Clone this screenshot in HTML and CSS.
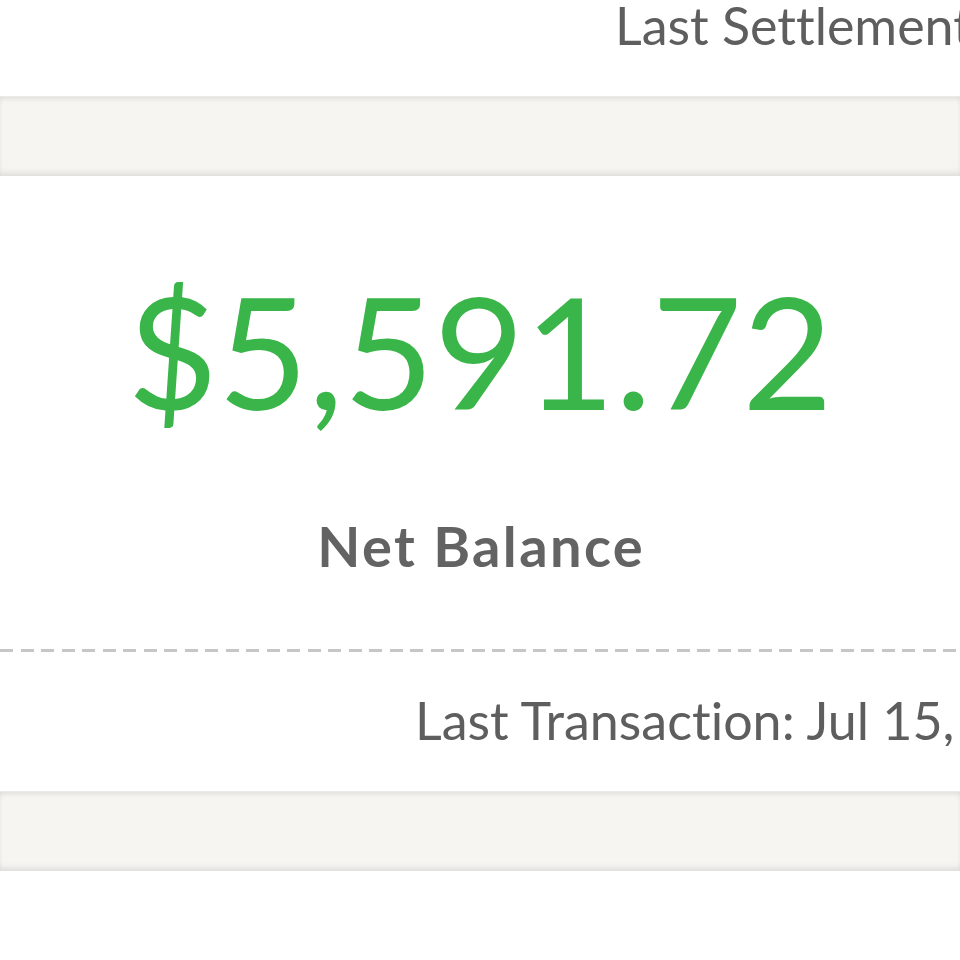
FILE: index.html
```html
<!DOCTYPE html>
<html lang="en">
<head>
<meta charset="utf-8">
<title>Net Balance</title>
<link rel="stylesheet" href="styles.css">
</head>
<body>
<div class="page">
  <div class="header">
    <span class="meta meta-settlement">Last Settlement: Jul 15, 2024</span>
  </div>
  <div class="band"></div>
  <section class="card">
    <div class="amount">$5,591.72</div>
    <div class="label">Net Balance</div>
    <div class="divider"></div>
    <div class="footer">
      <span class="meta meta-transaction">Last Transaction: Jul 15, 2024</span>
    </div>
  </section>
  <div class="band"></div>
</div>
</body>
</html>
```
FILE: styles.css
```css
html, body {
  margin: 0;
  padding: 0;
  background: #ffffff;
}
body {
  width: 960px;
  height: 960px;
  overflow: hidden;
  font-family: Lato, "Open Sans", sans-serif;
  font-variant-ligatures: none;
  font-feature-settings: "liga" 0, "clig" 0;
}
.page {
  display: flex;
  flex-direction: column;
  width: 960px;
}
.header {
  height: 96px;
  display: flex;
  white-space: nowrap;
  overflow: hidden;
}
.meta {
  font-size: 52px;
  line-height: 50px;
  color: #5e5e5e;
  font-weight: 400;
  white-space: nowrap;
}
.meta-settlement {
  padding-left: 615px;
}
.band {
  height: 80px;
  background: #f6f5f2;
  box-shadow: inset 0 4px 5px -2px rgba(0,0,0,0.09), inset 0 -4px 6px -2px rgba(0,0,0,0.10);
  border-top: 1px solid #ebeae7;
  border-bottom: 1px solid #e2e1de;
  box-sizing: border-box;
}
.card {
  background: #ffffff;
  display: flex;
  flex-direction: column;
  align-items: center;
  padding-top: 96px;
  padding-bottom: 45px;
}
.amount {
  font-size: 156px;
  line-height: 156px;
  color: #3ab54a;
  font-weight: 400;
}
.label {
  margin-top: 90px;
  padding-left: 2.4px;
  font-size: 56px;
  line-height: 56px;
  font-weight: 700;
  letter-spacing: 2.4px;
  color: #636363;
}
.divider {
  margin-top: 75px;
  align-self: stretch;
  height: 3px;
  background: repeating-linear-gradient(to right, #c6c6c6 0, #c6c6c6 13px, transparent 13px, transparent 20.5px);
}
.footer {
  margin-top: 42px;
  align-self: stretch;
  display: flex;
  overflow: hidden;
  white-space: nowrap;
}
.meta-transaction {
  padding-left: 415px;
  line-height: 52px;
}
```
